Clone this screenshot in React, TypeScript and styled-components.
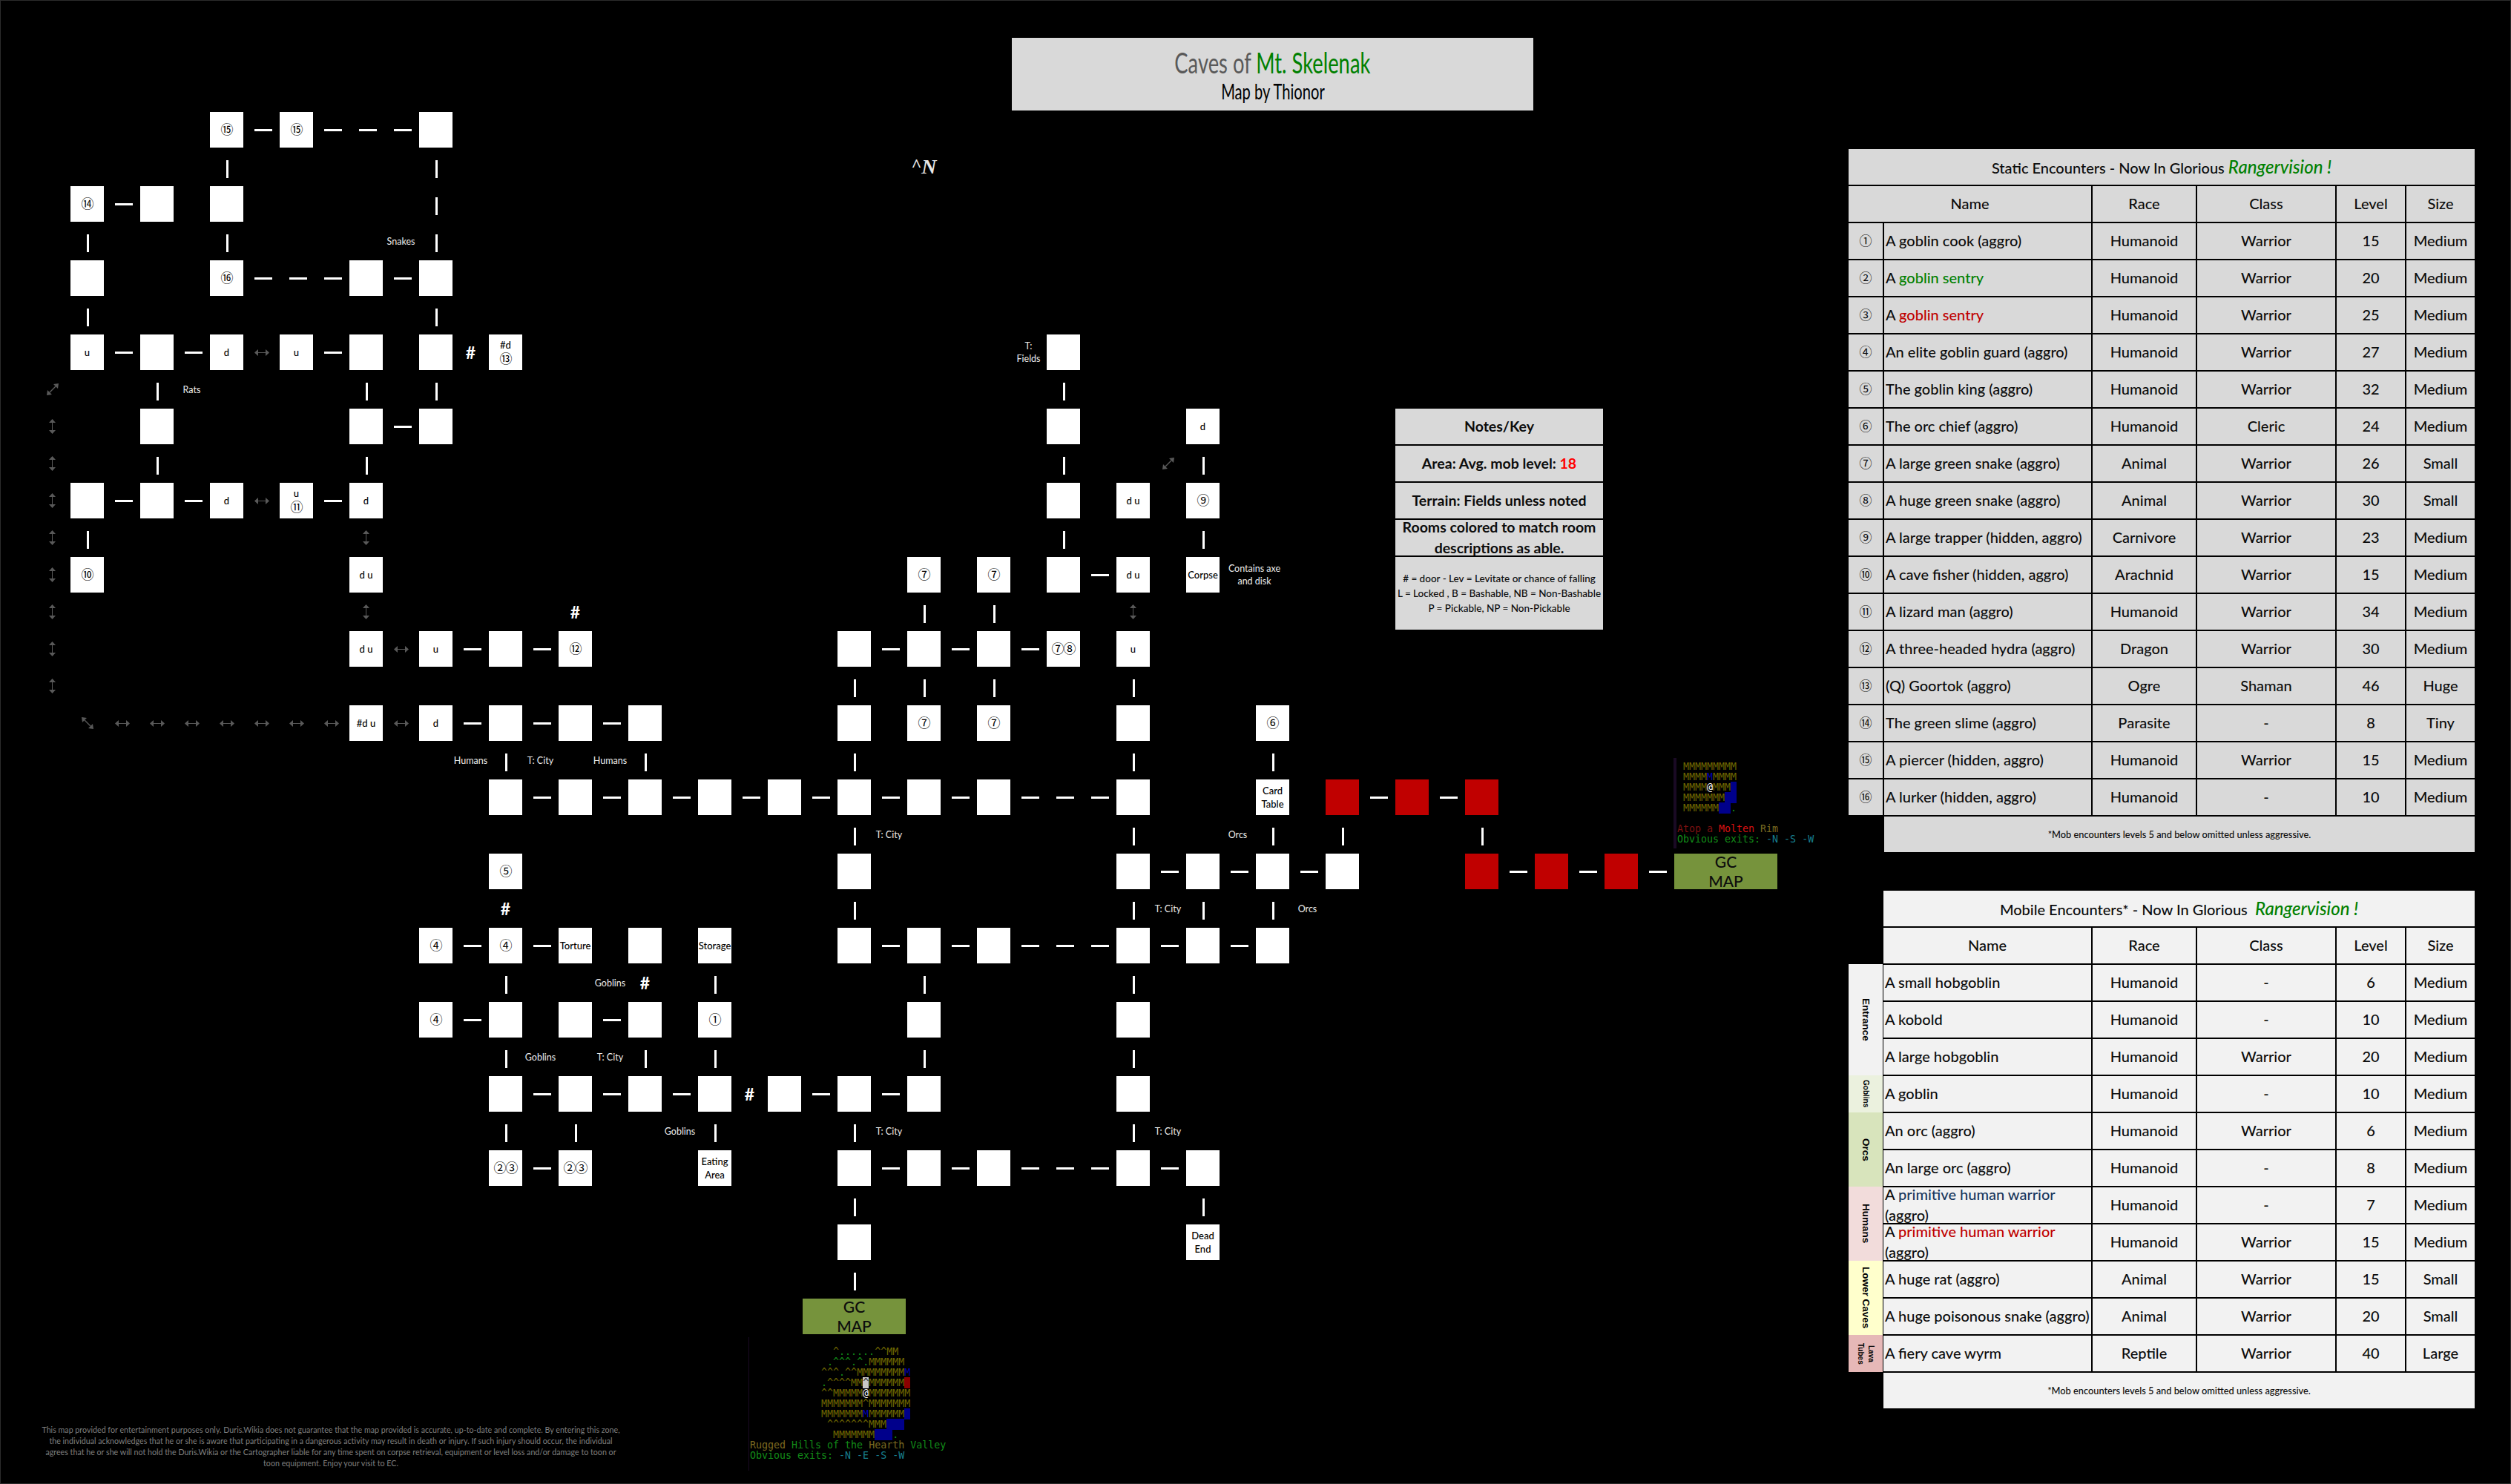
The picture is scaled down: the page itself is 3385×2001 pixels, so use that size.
import React from "react";
import styled, { createGlobalStyle } from "styled-components";

const Global = createGlobalStyle`
  html, body { margin: 0; padding: 0; background: #000; }
  body { font-family: Lato, "Noto Sans", sans-serif; }
`;

const Page = styled.div`
  display: flex;
  width: 3385px;
  height: 2001px;
  overflow: hidden;
  background: #000;
  outline: 1px solid #2b2b2b;
  outline-offset: -1px;
`;

/* ---------- the map sheet: rooms sit on a spreadsheet-like track grid ---------- */
const Sheet = styled.div`
  box-sizing: border-box;
  width: 2492px;
  flex: none;
  padding: 51px 0 0 46px;
  display: grid;
  grid-template-columns: 49px repeat(26, 45px 49px);
  grid-template-rows: repeat(20, 48px 52px);
`;

type Pos = { $c: number; $r: number };
const roomCol = (k: number) => 2 * k + 2;
const gapCol = (g: number) => 2 * g + 3;
const roomRow = (r: number) => 2 * r + 3;
const gapRow = (r: number) => 2 * r + 4;

const Room = styled.div<Pos & { $red?: boolean }>`
  grid-column: ${(p) => p.$c};
  grid-row: ${(p) => p.$r};
  background: ${(p) => (p.$red ? "#c00000" : "#fff")};
  color: #000;
  display: flex;
  align-items: center;
  justify-content: center;
  font-size: 13px;
  font-weight: 500;
  overflow: hidden;
`;

const RoomText = styled.div`
  text-align: center;
  white-space: pre-line;
  line-height: 18px;
`;

const Circled = styled.span`
  font-family: "Noto Sans CJK JP", "DejaVu Sans", sans-serif;
  font-size: 17px;
  font-weight: 400;
  letter-spacing: -1px;
`;

const HDash = styled.i<Pos & { $inset: number }>`
  grid-column: ${(p) => p.$c};
  grid-row: ${(p) => p.$r};
  align-self: center;
  justify-self: start;
  margin-left: ${(p) => p.$inset}px;
  width: 24px;
  height: 3px;
  background: #fff;
`;

const VDash = styled.i<Pos & { $inset: number }>`
  grid-column: ${(p) => p.$c};
  grid-row: ${(p) => p.$r};
  align-self: start;
  justify-self: start;
  margin-top: ${(p) => p.$inset}px;
  margin-left: 22px;
  width: 3px;
  height: 24px;
  background: #fff;
`;

const Mark = styled.div<Pos>`
  grid-column: ${(p) => p.$c};
  grid-row: ${(p) => p.$r};
  align-self: center;
  justify-self: center;
  display: flex;
`;

const Door = styled(Mark)`
  color: #fff;
  font-weight: 700;
  font-size: 23px;
  line-height: 24px;
`;

const Note = styled(Mark)<{ $span?: number }>`
  grid-column: ${(p) => p.$c} / span ${(p) => p.$span ?? 1};
  color: #ececec;
  font-size: 12.5px;
  line-height: 17px;
  white-space: pre;
  text-align: center;
`;

const North = styled(Mark)`
  color: #e8e8e8;
  font-family: "Liberation Serif", serif;
  font-size: 28px;
  font-style: italic;
  font-weight: 700;
  line-height: 30px;
`;

const Caret = styled.span`
  font-style: normal;
  font-size: 24px;
  margin-top: -3px;
`;

const GcMap = styled.div<{ $c: number; $r: number; $inset: number }>`
  grid-column: ${(p) => p.$c} / span 3;
  grid-row: ${(p) => p.$r};
  margin-left: ${(p) => p.$inset}px;
  margin-right: ${(p) => p.$inset}px;
  background: #76933c;
  color: #0c0c0c;
  display: flex;
  align-items: center;
  justify-content: center;
  overflow: hidden;
`;

const GcText = styled.div`
  font-size: 21px;
  font-weight: 500;
  line-height: 26px;
  text-align: center;
  white-space: pre-line;
`;

const TitleBox = styled.div`
  grid-column: ${gapCol(13)} / span 15;
  grid-row: ${roomRow(-1)} / span 2;
  margin-left: 2px;
  width: 703px;
  height: 98px;
  background: #d9d9d9;
  display: flex;
  flex-direction: column;
  align-items: center;
`;

const TitleMain = styled.div`
  color: #595959;
  font-size: 38px;
  line-height: 40px;
  margin-top: 13px;
  transform: scaleX(0.72);
`;

const TitleSub = styled.div`
  color: #000;
  font-size: 28px;
  line-height: 30px;
  margin-top: 4px;
  transform: scaleX(0.72);
`;

const Green = styled.span`
  color: #008000;
`;

/* notes */
const Notes = styled.div`
  grid-column: ${roomCol(19)} / span 7;
  grid-row: ${roomRow(4)} / span 6;
  width: 280px;
  height: 298px;
  background: #000;
  display: flex;
  flex-direction: column;
  gap: 2px;
`;

const NoteRow = styled.div<{ $h?: number }>`
  height: ${(p) => p.$h ?? 48}px;
  flex: none;
  background: #d9d9d9;
  color: #0c0c0c;
  display: flex;
  align-items: center;
  justify-content: center;
  overflow: hidden;
`;

const NoteText = styled.div<{ $small?: boolean }>`
  text-align: center;
  white-space: pre;
  font-weight: ${(p) => (p.$small ? 500 : 700)};
  font-size: ${(p) => (p.$small ? 13.5 : 19.5)}px;
  line-height: ${(p) => (p.$small ? 20 : 28)}px;
`;

const Red = styled.span`
  color: #ff0000;
`;

/* terminal captures */
const Terminal = styled.div<{ $c: number; $r: number; $mt: number; $ml: number; $pb: number; $bar: number }>`
  grid-column: ${(p) => p.$c} / span 12;
  grid-row: ${(p) => p.$r} / span 6;
  margin: ${(p) => p.$mt}px 0 0 ${(p) => p.$ml}px;
  align-self: start;
  justify-self: start;
  border-left: ${(p) => p.$bar}px solid #1a0a24;
  padding: ${(p) => p.$pb}px 0 ${(p) => p.$pb}px 1px;
  font-family: "DejaVu Sans Mono", monospace;
  font-size: 13.3px;
  line-height: 14px;
  white-space: pre;
`;

const TermLine = styled.div`
  height: 14px;
`;

const tones: Record<string, string> = {
  o: "color:#6f6600;",
  y: "color:#7a6a20;",
  g: "color:#128c18;",
  t: "color:#177f8f;",
  b: "color:#0000b0;",
  w: "color:#fff;",
  d: "color:#7d1010;",
  r: "color:#d81010;",
  B: "background:#00008b;color:#00008b;",
  R: "background:#8b0000;color:#8b0000;",
  S: "background:#c8c8c8;color:#333;",
};

const Tx = styled.span<{ $t: string }>`
  ${(p) => tones[p.$t]}
`;

type Seg = [string, string];
const Term = ({ lines }: { lines: Seg[][] }) => (
  <>
    {lines.map((l, i) => (
      <TermLine key={i}>
        {l.map(([s, t], j) => (
          <Tx key={j} $t={t}>
            {s}
          </Tx>
        ))}
      </TermLine>
    ))}
  </>
);

const hillLines: Seg[][] = [
  [["              ^", "o"], ["......", "g"], ["^^MM", "o"]],
  [["             .", "g"], ["^^^", "g"], [".", "g"], ["^", "g"], [".", "g"], ["MMMMMM", "o"]],
  [["            ^^^", "o"], [".", "g"], ["^^", "o"], ["MMMMMMMM", "o"], ["M", "b"]],
  [["            .", "g"], ["^^^^", "o"], ["MM", "o"], ["^", "S"], ["MMMMMM", "o"], [" ", "R"]],
  [["            ^^", "o"], ["MMMMM", "o"], ["@", "w"], ["MMMMMMM", "o"]],
  [["            MMMMMMM^MMMMMMM", "o"]],
  [["            MMMMMMM", "o"], ["M", "b"], ["MMMMMM", "o"], [" ", "B"]],
  [["             ^^^^^^^MMM", "o"], ["   ", "B"]],
  [["              MMMMMMM", "o"], ["   ", "B"], [".", "g"]],
  [["Rugged ", "y"], ["Hills of the ", "g"], ["Hearth ", "y"], ["Valley", "g"]],
  [["Obvious exits: ", "g"], ["-N -E -S -W", "t"]],
];

const rimLines: Seg[][] = [
  [[" MMMMMMMMM", "o"]],
  [[" MMMM", "o"], ["M", "b"], ["MMMM", "o"]],
  [[" MMMM", "o"], ["@", "w"], ["MMM", "o"], [" ", "B"]],
  [[" MMMMMMM", "o"], ["  ", "B"]],
  [[" MMMMMM", "o"], ["  ", "B"], [".", "g"]],
  [[" ", "o"]],
  [["Atop a ", "d"], ["Molten ", "r"], ["Rim", "y"]],
  [["Obvious exits: ", "g"], ["-N -S -W", "t"]],
];

const Disclaimer = styled.div`
  grid-column: 1 / span 18;
  grid-row: ${gapRow(17)} / span 3;
  margin-top: 21px;
  width: 800px;
  color: #7f7f7f;
  font-size: 10.7px;
  line-height: 15px;
  text-align: center;
  white-space: pre;
`;

/* ---------- right column: encounter tables ---------- */
const Tables = styled.div`
  flex: none;
  width: 844px;
  padding-top: 201px;
  display: flex;
  flex-direction: column;
  gap: 52px;
`;

const StaticGrid = styled.div`
  display: grid;
  grid-template-columns: 46px 279px 139px 186px 92px 92px;
  grid-auto-rows: 48px;
  gap: 2px;
`;

const MobileWrap = styled.div`
  display: flex;
`;

const Side = styled.div`
  width: 46px;
  margin: 99px 1px 0 0;
  flex: none;
  display: flex;
  flex-direction: column;
`;

const SideCell = styled.div<{ $bg: string; $h: number; $fs: number }>`
  height: ${(p) => p.$h}px;
  background: ${(p) => p.$bg};
  color: #000;
  writing-mode: vertical-rl;
  display: flex;
  align-items: center;
  justify-content: center;
  text-align: center;
  white-space: pre-line;
  font-family: "Liberation Sans", sans-serif;
  font-weight: 700;
  font-size: ${(p) => p.$fs}px;
  line-height: 14px;
`;

const MobileGrid = styled.div`
  display: grid;
  grid-template-columns: 280px 139px 186px 92px 92px;
  grid-auto-rows: 48px;
  gap: 2px;
`;

const Cell = styled.div<{ $bg: string; $left?: boolean; $span?: string }>`
  ${(p) => (p.$span ? `grid-column: ${p.$span};` : "")}
  background: ${(p) => p.$bg};
  color: #0c0c0c;
  display: flex;
  align-items: center;
  justify-content: ${(p) => (p.$left ? "flex-start" : "center")};
  padding: 0 0 2px ${(p) => (p.$left ? 2 : 0)}px;
  font-size: 20px;
  font-weight: 500;
  line-height: 28px;
  overflow: hidden;
`;

const NameText = styled.div`
  width: 100%;
`;

const TitleCell = styled(Cell)`
  padding-bottom: 0;
  font-size: 20px;
`;

const TitleText = styled.div`
  white-space: pre;
`;

const Vision = styled.em`
  color: #008000;
  font-size: 24px;
`;

const FootCell = styled(Cell)`
  padding-bottom: 0;
  font-size: 12.8px;
`;

const NumCell = styled(Cell)`
  font-family: "Noto Sans CJK JP", sans-serif;
  font-size: 17px;
  font-weight: 400;
`;

const Gobl = styled.span<{ $c: string }>`
  color: ${(p) => p.$c};
`;

const Blank = styled.div``;

/* arrows */
const ArrowSvg = styled.svg`
  display: block;
  fill: #595959;
  stroke: #595959;
`;

const ArrowH = () => (
  <ArrowSvg width="20" height="11" viewBox="0 0 20 11">
    <path d="M0 5.5 L5 1 V10 Z M20 5.5 L15 1 V10 Z" stroke="none" />
    <path d="M4 5.5 H16" strokeWidth="1" />
  </ArrowSvg>
);
const ArrowV = () => (
  <ArrowSvg width="11" height="20" viewBox="0 0 11 20">
    <path d="M5.5 0 L1 5 H10 Z M5.5 20 L1 15 H10 Z" stroke="none" />
    <path d="M5.5 4 V16" strokeWidth="1" />
  </ArrowSvg>
);
const ArrowNE = () => (
  <ArrowSvg width="16" height="16" viewBox="0 0 16 16">
    <path d="M16 0 L9 1 L15 7 Z M0 16 L7 15 L1 9 Z" stroke="none" />
    <path d="M4 12 L12 4" strokeWidth="1.4" />
  </ArrowSvg>
);
const ArrowNW = () => (
  <ArrowSvg width="16" height="16" viewBox="0 0 16 16">
    <path d="M0 0 L7 1 L1 7 Z M16 16 L9 15 L15 9 Z" stroke="none" />
    <path d="M4 4 L12 12" strokeWidth="1.4" />
  </ArrowSvg>
);

/* ---------- data ---------- */
type RoomDef = [number, number, string?];
const rooms: RoomDef[] = [
  [2, 0, "⑮"], [3, 0, "⑮"], [5, 0],
  [0, 1, "⑭"], [1, 1], [2, 1],
  [0, 2], [2, 2, "⑯"], [4, 2], [5, 2],
  [0, 3, "u"], [1, 3], [2, 3, "d"], [3, 3, "u"], [4, 3], [5, 3], [6, 3, "#d\n⑬"], [14, 3, ""],
  [1, 4], [4, 4], [5, 4], [14, 4], [16, 4, "d"],
  [0, 5], [1, 5], [2, 5, "d"], [3, 5, "u\n⑪"], [4, 5, "d"], [14, 5], [15, 5, "d u"], [16, 5, "⑨"],
  [0, 6, "⑩"], [4, 6, "d u"], [12, 6, "⑦"], [13, 6, "⑦"], [14, 6], [15, 6, "d u"], [16, 6, "Corpse"],
  [4, 7, "d u"], [5, 7, "u"], [6, 7], [7, 7, "⑫"], [11, 7], [12, 7], [13, 7], [14, 7, "⑦⑧"], [15, 7, "u"],
  [4, 8, "#d u"], [5, 8, "d"], [6, 8], [7, 8], [8, 8], [11, 8], [12, 8, "⑦"], [13, 8, "⑦"], [15, 8], [17, 8, "⑥"],
  [6, 9], [7, 9], [8, 9], [9, 9], [10, 9], [11, 9], [12, 9], [13, 9], [15, 9], [17, 9, "Card\nTable"],
  [6, 10, "⑤"], [11, 10], [15, 10], [16, 10], [17, 10], [18, 10],
  [5, 11, "④"], [6, 11, "④"], [7, 11, "Torture"], [8, 11], [9, 11, "Storage"], [11, 11], [12, 11], [13, 11], [15, 11], [16, 11], [17, 11],
  [5, 12, "④"], [6, 12], [7, 12], [8, 12], [9, 12, "①"], [12, 12], [15, 12],
  [6, 13], [7, 13], [8, 13], [9, 13], [10, 13], [11, 13], [12, 13], [15, 13],
  [6, 14, "②③"], [7, 14, "②③"], [9, 14, "Eating\nArea"], [11, 14], [12, 14], [13, 14], [15, 14], [16, 14],
  [11, 15], [16, 15, "Dead\nEnd"],
];
const redRooms: [number, number][] = [[18, 9], [19, 9], [20, 9], [20, 10], [21, 10], [22, 10]];

const hGaps: Record<number, number[]> = {
  0: [2, 3, 4], 1: [0], 2: [2, 3, 4], 3: [0, 1, 3], 4: [4], 5: [0, 1, 3], 6: [14],
  7: [5, 6, 11, 12, 13], 8: [5, 6, 7], 9: [6, 7, 8, 9, 10, 11, 12, 13, 14, 18, 19],
  10: [15, 16, 17, 20, 21, 22], 11: [5, 6, 11, 12, 13, 14, 15, 16], 12: [5, 7],
  13: [6, 7, 8, 10, 11], 14: [6, 11, 12, 13, 14, 15],
};
const hFill: [number, number][] = [[4, 0], [3, 2], [14, 9], [14, 11], [14, 14]];
const vGaps: Record<number, number[]> = {
  0: [2, 5], 1: [0, 2, 5], 2: [0, 5], 3: [1, 4, 5, 14], 4: [1, 4, 14, 16], 5: [0, 14, 16],
  6: [12, 13], 7: [11, 12, 13, 15], 8: [6, 8, 11, 15, 17], 9: [11, 15, 17, 18, 20],
  10: [11, 15, 16, 17], 11: [6, 9, 12, 15], 12: [6, 8, 9, 12, 15], 13: [6, 7, 9, 11, 15],
  14: [11, 16], 15: [11],
};

const notes: [number, number, string, number?][] = [
  [gapCol(4), gapRow(1), "Snakes"],
  [gapCol(1), gapRow(3), "Rats"],
  [gapCol(13), roomRow(3), "T:\nFields"],
  [gapCol(16), roomRow(6), "Contains axe\nand disk", 2],
  [gapCol(5), gapRow(8), "Humans"],
  [gapCol(6), gapRow(8), "T: City"],
  [gapCol(7), gapRow(8), "Humans"],
  [gapCol(11), gapRow(9), "T: City"],
  [gapCol(16), gapRow(9), "Orcs"],
  [gapCol(15), gapRow(10), "T: City"],
  [gapCol(17), gapRow(10), "Orcs"],
  [gapCol(7), gapRow(11), "Goblins"],
  [gapCol(6), gapRow(12), "Goblins"],
  [gapCol(7), gapRow(12), "T: City"],
  [gapCol(8), gapRow(13), "Goblins"],
  [gapCol(11), gapRow(13), "T: City"],
  [gapCol(15), gapRow(13), "T: City"],
];

const doors: [number, number][] = [
  [gapCol(5), roomRow(3)],
  [roomCol(7), gapRow(6)],
  [roomCol(6), gapRow(10)],
  [roomCol(8), gapRow(11)],
  [gapCol(9), roomRow(13)],
];

const farV: number[] = [roomRow(4), gapRow(4), roomRow(5), gapRow(5), roomRow(6), gapRow(6), roomRow(7), gapRow(7)];
const farH: number[] = [gapCol(0), roomCol(1), gapCol(1), roomCol(2), gapCol(2), roomCol(3), gapCol(3), gapCol(4)];

const renderLabel = (t: string) => (
  <RoomText>
    {t.split(/([①-⑳]+)/).map((part, i) =>
      /[①-⑳]/.test(part) ? <Circled key={i}>{part}</Circled> : part
    )}
  </RoomText>
);

const staticRows: [string, React.ReactNode, string, string, string, string][] = [
  ["①", "A goblin cook (aggro)", "Humanoid", "Warrior", "15", "Medium"],
  ["②", <>A <Gobl $c="#008000">goblin sentry</Gobl></>, "Humanoid", "Warrior", "20", "Medium"],
  ["③", <>A <Gobl $c="#c00000">goblin sentry</Gobl></>, "Humanoid", "Warrior", "25", "Medium"],
  ["④", "An elite goblin guard (aggro)", "Humanoid", "Warrior", "27", "Medium"],
  ["⑤", "The goblin king (aggro)", "Humanoid", "Warrior", "32", "Medium"],
  ["⑥", "The orc chief (aggro)", "Humanoid", "Cleric", "24", "Medium"],
  ["⑦", "A large green snake (aggro)", "Animal", "Warrior", "26", "Small"],
  ["⑧", "A huge green snake (aggro)", "Animal", "Warrior", "30", "Small"],
  ["⑨", "A large trapper (hidden, aggro)", "Carnivore", "Warrior", "23", "Medium"],
  ["⑩", "A cave fisher (hidden, aggro)", "Arachnid", "Warrior", "15", "Medium"],
  ["⑪", "A lizard man (aggro)", "Humanoid", "Warrior", "34", "Medium"],
  ["⑫", "A three-headed hydra (aggro)", "Dragon", "Warrior", "30", "Medium"],
  ["⑬", "(Q) Goortok (aggro)", "Ogre", "Shaman", "46", "Huge"],
  ["⑭", "The green slime (aggro)", "Parasite", "-", "8", "Tiny"],
  ["⑮", "A piercer (hidden, aggro)", "Humanoid", "Warrior", "15", "Medium"],
  ["⑯", "A lurker (hidden, aggro)", "Humanoid", "-", "10", "Medium"],
];

const mobileRows: [React.ReactNode, string, string, string, string][] = [
  ["A small hobgoblin", "Humanoid", "-", "6", "Medium"],
  ["A kobold", "Humanoid", "-", "10", "Medium"],
  ["A large hobgoblin", "Humanoid", "Warrior", "20", "Medium"],
  ["A goblin", "Humanoid", "-", "10", "Medium"],
  ["An orc (aggro)", "Humanoid", "Warrior", "6", "Medium"],
  ["An large orc (aggro)", "Humanoid", "-", "8", "Medium"],
  [<>A <Gobl $c="#17375e">primitive human warrior</Gobl> (aggro)</>, "Humanoid", "-", "7", "Medium"],
  [<>A <Gobl $c="#c00000">primitive human warrior</Gobl> (aggro)</>, "Humanoid", "Warrior", "15", "Medium"],
  ["A huge rat (aggro)", "Animal", "Warrior", "15", "Small"],
  ["A huge poisonous snake (aggro)", "Animal", "Warrior", "20", "Small"],
  ["A fiery cave wyrm", "Reptile", "Warrior", "40", "Large"],
];

const sides: [string, string, number, number][] = [
  ["Entrance", "#f2f2f2", 150, 13.5],
  ["Goblins", "#ebf1de", 50, 10],
  ["Orcs", "#d8e4bc", 100, 13.5],
  ["Humans", "#f2dcdb", 100, 13.5],
  ["Lower Caves", "#ffffcc", 100, 13.5],
  ["Lava\nTubes", "#e6b8b7", 50, 10],
];

const FOOT = "*Mob encounters levels 5 and below omitted unless aggressive.";
const GREY = "#d9d9d9";
const PALE = "#f2f2f2";

export default function App() {
  return (
    <Page>
      <Global />
      <Sheet>
        <TitleBox>
          <TitleMain>
            Caves of <Green>Mt. Skelenak</Green>
          </TitleMain>
          <TitleSub>Map by Thionor</TitleSub>
        </TitleBox>

        <North $c={roomCol(12)} $r={gapRow(0)}>
          <Caret>^</Caret>N
        </North>

        {rooms.map(([k, r, t]) => (
          <Room key={`r${k}-${r}`} $c={roomCol(k)} $r={roomRow(r)}>
            {t ? renderLabel(t) : null}
          </Room>
        ))}
        {redRooms.map(([k, r]) => (
          <Room key={`x${k}-${r}`} $c={roomCol(k)} $r={roomRow(r)} $red />
        ))}

        {Object.entries(hGaps).flatMap(([r, gs]) =>
          gs.map((g) => <HDash key={`h${r}-${g}`} $c={gapCol(g)} $r={roomRow(+r)} $inset={15} />)
        )}
        {hFill.map(([k, r]) => (
          <HDash key={`hf${k}-${r}`} $c={roomCol(k)} $r={roomRow(r)} $inset={13} />
        ))}
        {Object.entries(vGaps).flatMap(([r, ks]) =>
          ks.map((k) => <VDash key={`v${r}-${k}`} $c={roomCol(k)} $r={gapRow(+r)} $inset={17} />)
        )}
        <VDash $c={roomCol(5)} $r={roomRow(1)} $inset={15} />

        {farV.map((r) => (
          <Mark key={`fv${r}`} $c={1} $r={r}><ArrowV /></Mark>
        ))}
        <Mark $c={1} $r={gapRow(3)}><ArrowNE /></Mark>
        <Mark $c={roomCol(0)} $r={roomRow(8)}><ArrowNW /></Mark>
        {farH.map((c) => (
          <Mark key={`fh${c}`} $c={c} $r={roomRow(8)}><ArrowH /></Mark>
        ))}
        <Mark $c={gapCol(2)} $r={roomRow(3)}><ArrowH /></Mark>
        <Mark $c={gapCol(2)} $r={roomRow(5)}><ArrowH /></Mark>
        <Mark $c={gapCol(4)} $r={roomRow(7)}><ArrowH /></Mark>
        <Mark $c={roomCol(4)} $r={gapRow(5)}><ArrowV /></Mark>
        <Mark $c={roomCol(4)} $r={gapRow(6)}><ArrowV /></Mark>
        <Mark $c={roomCol(15)} $r={gapRow(6)}><ArrowV /></Mark>
        <Mark $c={gapCol(15)} $r={gapRow(4)}><ArrowNE /></Mark>

        {doors.map(([c, r]) => (
          <Door key={`d${c}-${r}`} $c={c} $r={r}>#</Door>
        ))}
        {notes.map(([c, r, t, s], i) => (
          <Note key={i} $c={c} $r={r} $span={s}>{t}</Note>
        ))}

        <GcMap $c={gapCol(10)} $r={roomRow(16)} $inset={2}><GcText>{"GC\nMAP"}</GcText></GcMap>
        <GcMap $c={roomCol(23)} $r={roomRow(10)} $inset={0}><GcText>{"GC\nMAP"}</GcText></GcMap>

        <Terminal $c={gapCol(9)} $r={gapRow(16)} $mt={4} $ml={23} $pb={13} $bar={1}>
          <Term lines={hillLines} />
        </Terminal>
        <Terminal $c={gapCol(22)} $r={gapRow(8)} $mt={23} $ml={48} $pb={5} $bar={4}>
          <Term lines={rimLines} />
        </Terminal>

        <Notes>
          <NoteRow><NoteText>Notes/Key</NoteText></NoteRow>
          <NoteRow>
            <NoteText>Area: Avg. mob level: <Red>18</Red></NoteText>
          </NoteRow>
          <NoteRow><NoteText>Terrain: Fields unless noted</NoteText></NoteRow>
          <NoteRow><NoteText>{"Rooms colored to match room\ndescriptions as able."}</NoteText></NoteRow>
          <NoteRow $h={98}>
            <NoteText $small>
              {"# = door - Lev = Levitate or chance of falling\nL = Locked , B = Bashable, NB = Non-Bashable\nP = Pickable, NP = Non-Pickable"}
            </NoteText>
          </NoteRow>
        </Notes>

        <Disclaimer>
          {"This map provided for entertainment purposes only. Duris.Wikia does not guarantee that the map provided is accurate, up-to-date and complete. By entering this zone,\nthe individual acknowledges that he or she is aware that participating in a dangerous activity may result in death or injury. If such injury should occur, the individual\nagrees that he or she will not hold the Duris.Wikia or the Cartographer liable for any time spent on corpse retrieval, equipment or level loss and/or damage to toon or\ntoon equipment. Enjoy your visit to EC."}
        </Disclaimer>
      </Sheet>

      <Tables>
        <StaticGrid>
          <TitleCell $bg={GREY} $span="1 / -1">
            <TitleText>Static Encounters - Now In Glorious <Vision>Rangervision !</Vision></TitleText>
          </TitleCell>
          <Cell $bg={GREY} $span="1 / 3">Name</Cell>
          <Cell $bg={GREY}>Race</Cell>
          <Cell $bg={GREY}>Class</Cell>
          <Cell $bg={GREY}>Level</Cell>
          <Cell $bg={GREY}>Size</Cell>
          {staticRows.map(([n, name, race, cls, lvl, size]) => (
            <React.Fragment key={n}>
              <NumCell $bg={GREY}>{n}</NumCell>
              <Cell $bg={GREY} $left><NameText>{name}</NameText></Cell>
              <Cell $bg={GREY}>{race}</Cell>
              <Cell $bg={GREY}>{cls}</Cell>
              <Cell $bg={GREY}>{lvl}</Cell>
              <Cell $bg={GREY}>{size}</Cell>
            </React.Fragment>
          ))}
          <Blank />
          <FootCell $bg={GREY} $span="2 / -1">{FOOT}</FootCell>
        </StaticGrid>

        <MobileWrap>
          <Side>
            {sides.map(([t, bg, h, fs]) => (
              <SideCell key={t} $bg={bg} $h={h} $fs={fs}>{t}</SideCell>
            ))}
          </Side>
          <MobileGrid>
            <TitleCell $bg={PALE} $span="1 / -1">
              <TitleText>Mobile Encounters* - Now In Glorious  <Vision>Rangervision !</Vision></TitleText>
            </TitleCell>
            <Cell $bg={PALE}>Name</Cell>
            <Cell $bg={PALE}>Race</Cell>
            <Cell $bg={PALE}>Class</Cell>
            <Cell $bg={PALE}>Level</Cell>
            <Cell $bg={PALE}>Size</Cell>
            {mobileRows.map(([name, race, cls, lvl, size], i) => (
              <React.Fragment key={i}>
                <Cell $bg={PALE} $left><NameText>{name}</NameText></Cell>
                <Cell $bg={PALE}>{race}</Cell>
                <Cell $bg={PALE}>{cls}</Cell>
                <Cell $bg={PALE}>{lvl}</Cell>
                <Cell $bg={PALE}>{size}</Cell>
              </React.Fragment>
            ))}
            <FootCell $bg={PALE} $span="1 / -1">{FOOT}</FootCell>
          </MobileGrid>
        </MobileWrap>
      </Tables>
    </Page>
  );
}
